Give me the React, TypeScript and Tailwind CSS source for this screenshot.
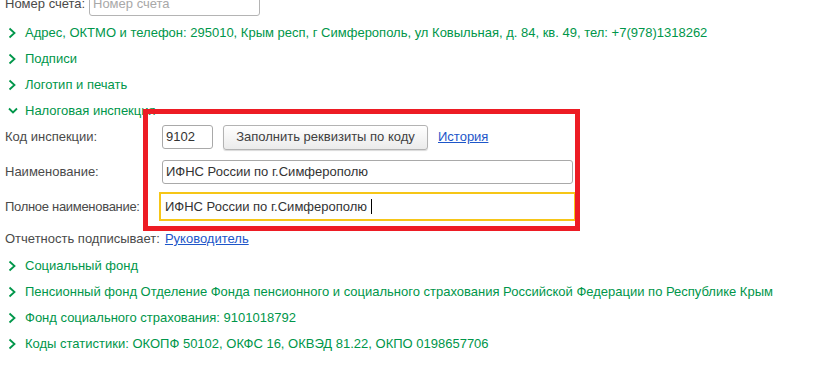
import React from "react";

const Chevron = ({ open = false }: { open?: boolean }) => (
  <svg width="10" height="12" viewBox="0 0 10 12" className="shrink-0">
    {open ? (
      <polyline points="1,3.5 5,7.5 9,3.5" fill="none" stroke="#00964a" strokeWidth="1.8" />
    ) : (
      <polyline points="1.5,1.5 6.5,6 1.5,10.5" fill="none" stroke="#00964a" strokeWidth="1.8" />
    )}
  </svg>
);

function Group({ title, open = false }: { title: string; open?: boolean }) {
  return (
    <div className="h-[26px] flex items-center gap-[7px] pl-[8px] text-[#00964a] whitespace-nowrap">
      <Chevron open={open} />
      <span>{title}</span>
    </div>
  );
}

export default function App() {
  const before = [
    "Адрес, ОКТМО и телефон: 295010, Крым респ, г Симферополь, ул Ковыльная, д. 84, кв. 49, тел: +7(978)1318262",
    "Подписи",
    "Логотип и печать",
  ];
  const after = [
    "Социальный фонд",
    "Пенсионный фонд Отделение Фонда пенсионного и социального страхования Российской Федерации по Республике Крым",
    "Фонд социального страхования: 9101018792",
    "Коды статистики: ОКОПФ 50102, ОКФС 16, ОКВЭД 81.22, ОКПО 0198657706",
  ];

  return (
    <div
      className="relative w-[819px] h-[369px] overflow-hidden bg-white text-[13px] text-[#4a4a4a]"
      style={{ fontFamily: '"Liberation Sans", Arial, sans-serif' }}
    >
      <div className="flex flex-col">
        {/* Номер счета */}
        <div className="-mt-[8px] h-[24px] flex items-center pl-[5px]">
          <span className="w-[84px]">Номер счета:</span>
          <div className="w-[171px] h-[24px] border border-[#b4b4b4] rounded-[3px] flex items-center pl-[3px] text-[#a8a8a8]">
            Номер счета
          </div>
        </div>

        <div className="mt-[4px]">
          {before.map((t) => (
            <Group key={t} title={t} />
          ))}
          <Group title="Налоговая инспекция" open />
        </div>

        {/* Налоговая инспекция */}
        <div className="mt-[1px] h-[24px] flex items-center pl-[5px]">
          <span className="w-[157px]">Код инспекции:</span>
          <div className="w-[51px] h-[24px] border border-[#a9a9a9] rounded-[3px] flex items-center pl-[3px] text-[#333]">
            9102
          </div>
          <button className="ml-[10px] w-[205px] h-[25px] border border-[#b3b3b3] rounded-[3px] bg-gradient-to-b from-white to-[#ebebeb] shadow-[0_1px_1px_rgba(0,0,0,0.15)] text-[#404040]">
            Заполнить реквизиты по коду
          </button>
          <a className="ml-[10px] text-[#1d56c9] underline">История</a>
        </div>

        <div className="mt-[11px] h-[24px] flex items-center pl-[5px]">
          <span className="w-[157px]">Наименование:</span>
          <div className="w-[411px] h-[24px] border border-[#a9a9a9] rounded-[3px] flex items-center pl-[3px] text-[#333]">
            ИФНС России по г.Симферополю
          </div>
        </div>

        <div className="mt-[8px] h-[29px] flex items-center pl-[5px]">
          <span className="w-[154px] tracking-[-0.3px]">Полное наименование:</span>
          <div className="w-[417px] h-[29px] border-2 border-[#f6c617] flex items-center pl-[4px] text-[#333]">
            ИФНС России по г.Симферополю
            <span className="ml-[4px] inline-block h-[15px] border-l border-black" />
          </div>
        </div>

        <div className="mt-[8px] h-[20px] flex items-center pl-[5px]">
          <span>Отчетность подписывает:</span>
          <a className="ml-[5px] text-[#1d56c9] underline">Руководитель</a>
        </div>

        <div className="mt-[4px]">
          {after.map((t) => (
            <Group key={t} title={t} />
          ))}
        </div>
      </div>

      {/* annotation frame */}
      <div className="absolute left-[143px] top-[109px] w-[437px] h-[122px] border-[5px] border-[#ed1c24] pointer-events-none" />
    </div>
  );
}
